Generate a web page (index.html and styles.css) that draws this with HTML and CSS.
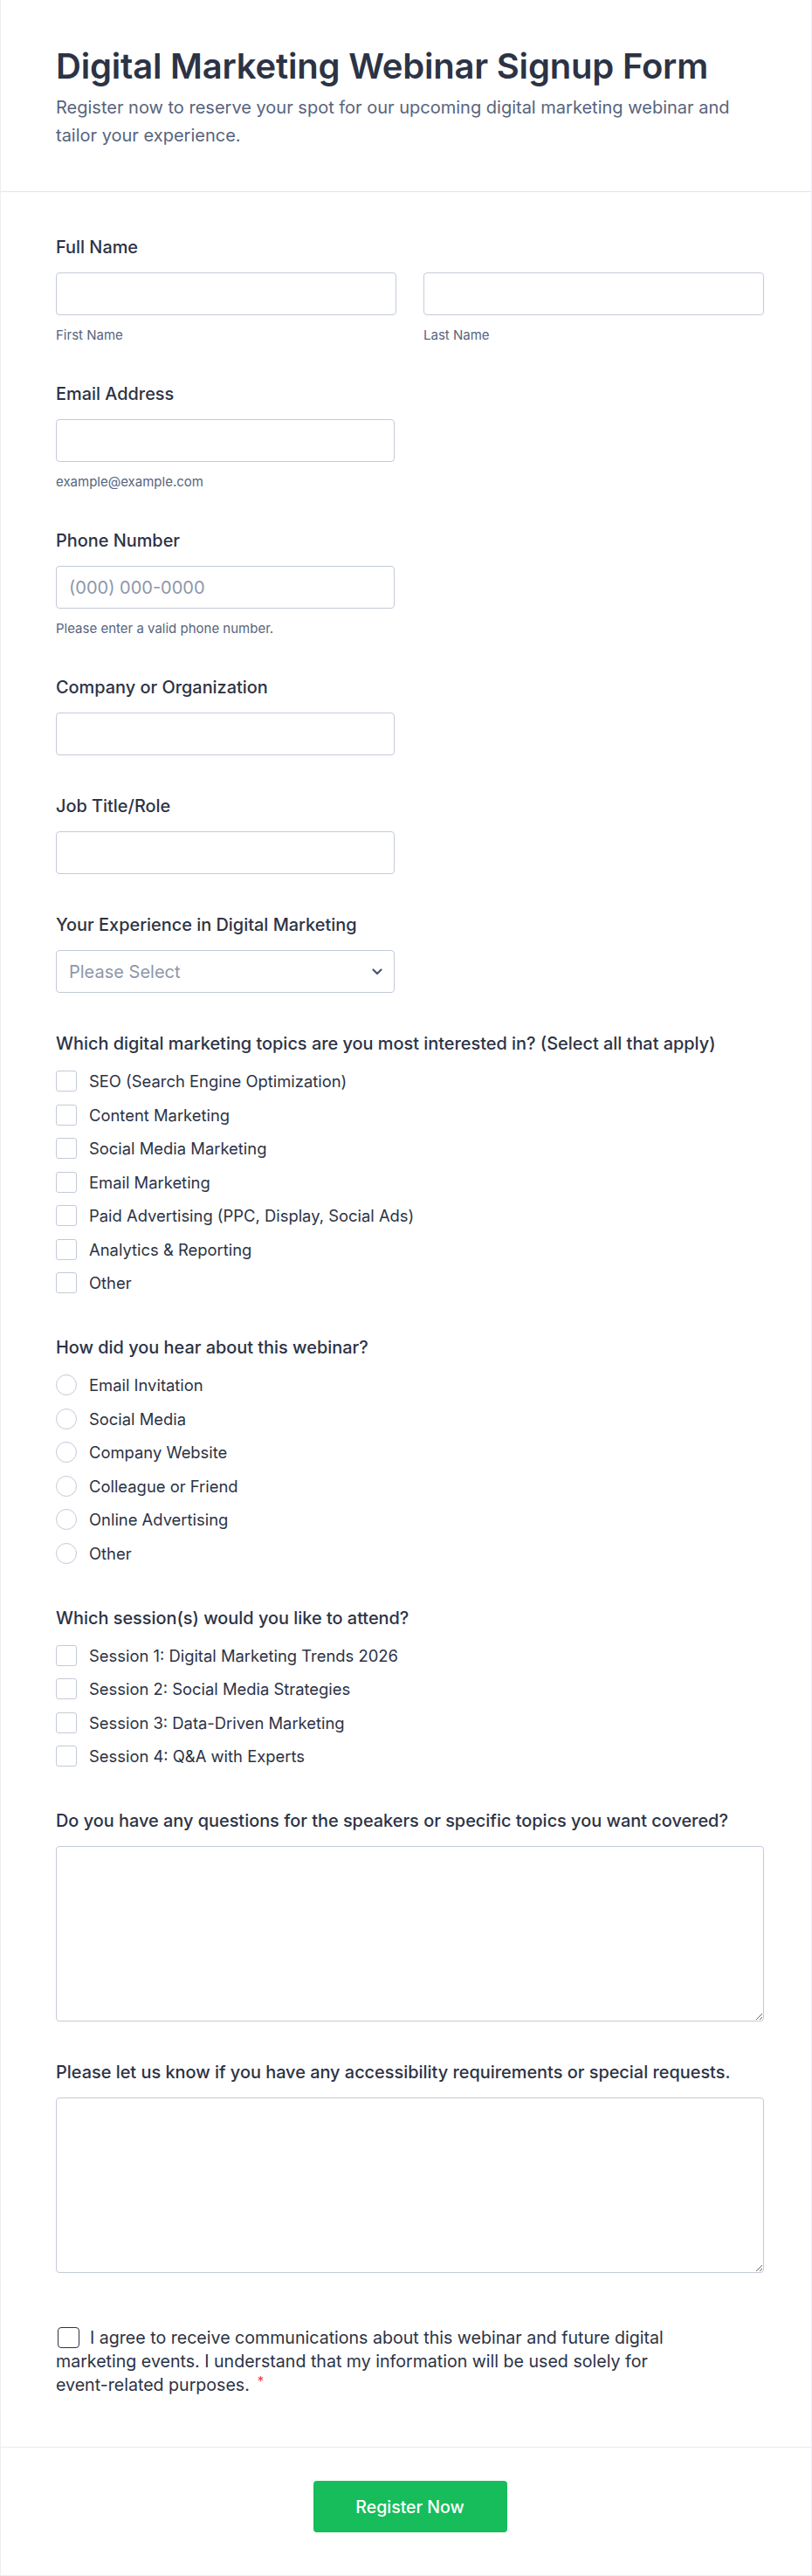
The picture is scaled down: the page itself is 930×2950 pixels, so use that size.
FILE: index.html
```html
<!DOCTYPE html>
<html lang="en">
<head>
<meta charset="utf-8">
<title>Digital Marketing Webinar Signup Form</title>
<link rel="stylesheet" href="styles.css">
</head>
<body>
<form class="card">
  <header class="head">
    <h1 class="title">Digital Marketing Webinar Signup Form</h1>
    <p class="subtitle">Register now to reserve your spot for our upcoming digital marketing webinar and tailor your experience.</p>
  </header>

  <div class="body">
    <div class="field">
      <label class="label">Full Name</label>
      <div class="pair">
        <div>
          <input class="input" type="text">
          <div class="sub">First Name</div>
        </div>
        <div>
          <input class="input" type="text">
          <div class="sub">Last Name</div>
        </div>
      </div>
    </div>

    <div class="field">
      <label class="label">Email Address</label>
      <input class="input half" type="email">
      <div class="sub">example@example.com</div>
    </div>

    <div class="field">
      <label class="label">Phone Number</label>
      <input class="input half" type="tel" placeholder="(000) 000-0000">
      <div class="sub">Please enter a valid phone number.</div>
    </div>

    <div class="field">
      <label class="label">Company or Organization</label>
      <input class="input half" type="text">
    </div>

    <div class="field">
      <label class="label">Job Title/Role</label>
      <input class="input half" type="text">
    </div>

    <div class="field">
      <label class="label">Your Experience in Digital Marketing</label>
      <div class="select-wrap half">
        <select class="select">
          <option>Please Select</option>
        </select>
        <svg class="chev" width="12" height="8" viewBox="0 0 12 8"><path d="M1.5 1.5 L6 6 L10.5 1.5" fill="none" stroke="#4a5674" stroke-width="2.2" stroke-linecap="round" stroke-linejoin="round"/></svg>
      </div>
    </div>

    <div class="field">
      <label class="label lead">Which digital marketing topics are you most interested in? (Select all that apply)</label>
      <div class="options">
        <label class="opt"><span class="box"></span>SEO (Search Engine Optimization)</label>
        <label class="opt"><span class="box"></span>Content Marketing</label>
        <label class="opt"><span class="box"></span>Social Media Marketing</label>
        <label class="opt"><span class="box"></span>Email Marketing</label>
        <label class="opt"><span class="box"></span>Paid Advertising (PPC, Display, Social Ads)</label>
        <label class="opt"><span class="box"></span>Analytics &amp; Reporting</label>
        <label class="opt"><span class="box"></span>Other</label>
      </div>
    </div>

    <div class="field">
      <label class="label lead">How did you hear about this webinar?</label>
      <div class="options">
        <label class="opt"><span class="box round"></span>Email Invitation</label>
        <label class="opt"><span class="box round"></span>Social Media</label>
        <label class="opt"><span class="box round"></span>Company Website</label>
        <label class="opt"><span class="box round"></span>Colleague or Friend</label>
        <label class="opt"><span class="box round"></span>Online Advertising</label>
        <label class="opt"><span class="box round"></span>Other</label>
      </div>
    </div>

    <div class="field">
      <label class="label lead">Which session(s) would you like to attend?</label>
      <div class="options">
        <label class="opt"><span class="box"></span>Session 1: Digital Marketing Trends 2026</label>
        <label class="opt"><span class="box"></span>Session 2: Social Media Strategies</label>
        <label class="opt"><span class="box"></span>Session 3: Data-Driven Marketing</label>
        <label class="opt"><span class="box"></span>Session 4: Q&amp;A with Experts</label>
      </div>
    </div>

    <div class="field">
      <label class="label">Do you have any questions for the speakers or specific topics you want covered?</label>
      <textarea class="area"></textarea>
    </div>

    <div class="field">
      <label class="label">Please let us know if you have any accessibility requirements or special requests.</label>
      <textarea class="area"></textarea>
    </div>

    <div class="consent">
      <span class="cbox"></span><span class="ctext">I agree to receive communications about this webinar and future digital marketing events. I understand that my information will be used solely for event-related purposes.</span><span class="req">*</span>
    </div>
  </div>

  <footer class="foot">
    <button class="btn" type="button">Register Now</button>
  </footer>
</form>
</body>
</html>
```

FILE: styles.css
```css
* { box-sizing: border-box; }

body {
  margin: 0;
  background: #ffffff;
  font-family: Inter, "Noto Sans", sans-serif;
  color: #2c3345;
}

.card {
  width: 930px;
  min-height: 2950px;
  border: 1px solid #eceef3;
  border-top: none;
  display: flex;
  flex-direction: column;
}

.head {
  padding: 53px 54px 48px 63px;
  border-bottom: 1px solid #e3e5ee;
}

.title {
  margin: 0;
  font-size: 40px;
  line-height: 46px;
  font-weight: 600;
  color: #2c3345;
  letter-spacing: -0.2px;
}

.subtitle {
  margin: 8px 0 0;
  font-size: 20px;
  line-height: 32px;
  color: #57647e;
}

.body {
  padding: 51px 54px 57px 63px;
  border-bottom: 1px solid #e9ebf2;
}

.field {
  margin-bottom: 46px;
}

.label {
  display: block;
  font-size: 19.9px;
  line-height: 24px;
  font-weight: 500;
  color: #2c3345;
  margin-bottom: 17px;
}

.label.lead { margin-bottom: 19px; }

.pair {
  display: grid;
  grid-template-columns: 390px 390px;
  column-gap: 31px;
}

.input, .select, .area {
  display: block;
  width: 100%;
  border: 1px solid #c3cad8;
  border-radius: 4px;
  background: #fff;
  font-family: inherit;
  font-size: 20px;
  color: #2c3345;
  outline: none;
}

.input {
  height: 49px;
  padding: 0 14px;
}

.input::placeholder { color: #8d97aa; }

.half { width: 388px; }

.sub {
  margin-top: 14px;
  font-size: 15px;
  line-height: 18px;
  color: #57647e;
}

.select-wrap {
  position: relative;
}

.select {
  height: 49px;
  padding: 0 14px;
  -webkit-appearance: none;
  appearance: none;
  color: #8d97aa;
}

.chev {
  position: absolute;
  right: 14px;
  top: 21px;
}

.options {
  display: flex;
  flex-direction: column;
  gap: 14.5px;
  padding-bottom: 4px;
}

.opt {
  display: flex;
  align-items: center;
  gap: 14px;
  font-size: 18.4px;
  line-height: 24px;
  color: #2c3345;
}

.box {
  width: 24px;
  height: 24px;
  flex: none;
  border: 1px solid #c3cad8;
  border-radius: 3px;
  background: #fff;
}

.box.round { border-radius: 50%; }

.area {
  height: 201px;
  resize: vertical;
  padding: 10px 14px;
}

.consent {
  margin-top: 61px;
  font-size: 19.6px;
  line-height: 27px;
  color: #2c3345;
  width: 730px;
}

.cbox {
  display: inline-block;
  width: 25px;
  height: 24px;
  border: 1.5px solid #2c3345;
  border-radius: 4px;
  vertical-align: -5px;
  margin-left: 2px;
  margin-right: 12px;
}

.req {
  color: #f23a3c;
  margin-left: 9px;
  font-size: 15px;
  line-height: 15px;
  vertical-align: 6px;
}

.foot {
  flex: 1;
  display: flex;
  justify-content: center;
  align-items: flex-start;
  padding: 38px 54px 0 63px;
}

.btn {
  width: 222px;
  height: 59px;
  border: none;
  border-radius: 4px;
  background: #18bd5b;
  color: #fff;
  font-family: inherit;
  font-size: 19.5px;
  font-weight: 500;
}
```
